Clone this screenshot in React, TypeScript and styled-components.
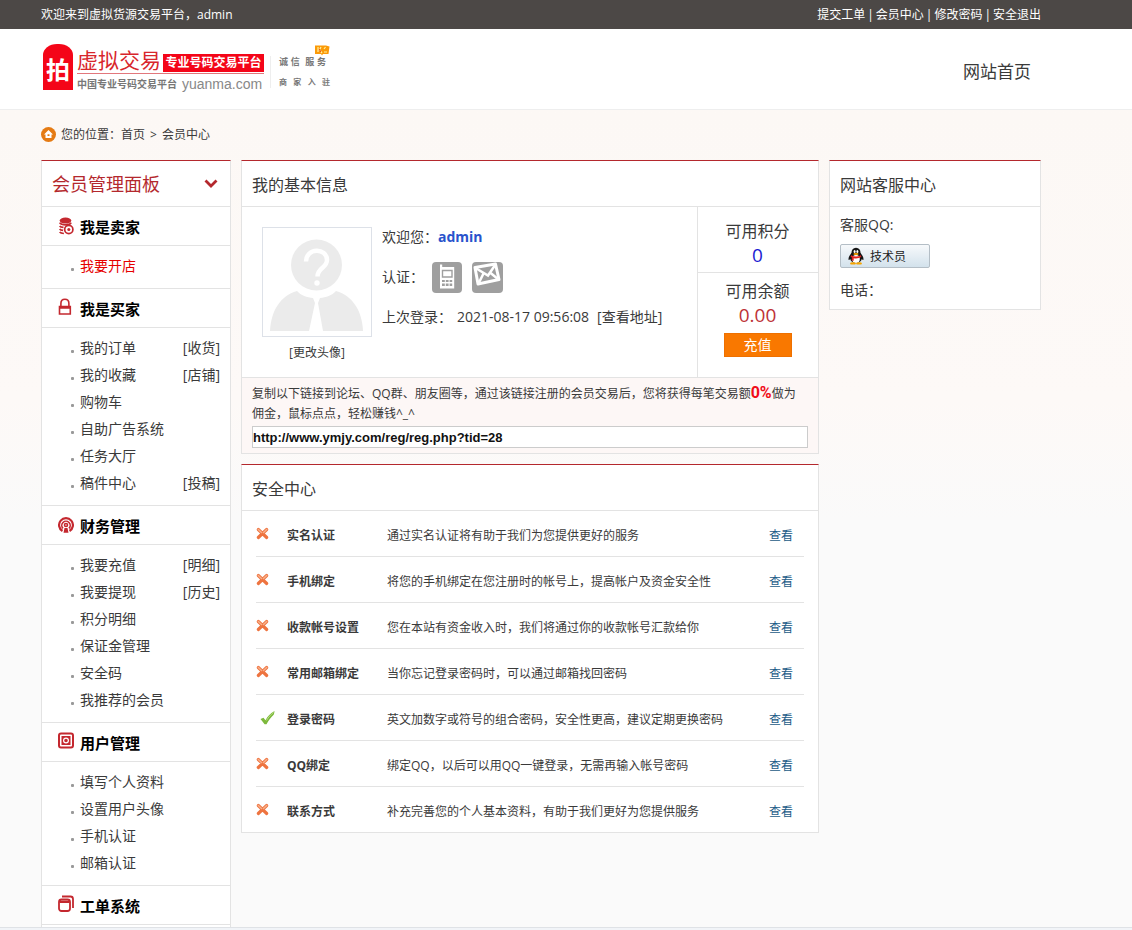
import React from 'react';
import styled, { createGlobalStyle } from 'styled-components';

const line = '#e3e3e3';
const red = '#b4282d';

const GlobalStyle = createGlobalStyle`
  *, *::before, *::after { box-sizing: border-box; }
  body {
    margin: 0;
    background: linear-gradient(to bottom, #fcf8f5 110px, #fdf9f7 400px, #fafafa 520px) no-repeat #fafafa;
    color: #3a3a3a;
    font: 12px/20px "Open Sans", "Noto Sans CJK SC", sans-serif;
  }
  a { color: inherit; text-decoration: none; }
  a:hover { text-decoration: underline; }
  ul, h1, h2, h3, p, dl, dd { margin: 0; padding: 0; list-style: none; }
`;

const Gutter = styled.div`
  padding: 0 91px 0 41px;
`;

const TopBar = styled(Gutter)`
  display: flex;
  justify-content: space-between;
  height: 29px;
  line-height: 29px;
  background: #4c4846;
  color: #fff;
`;

const TopLinks = styled.nav`
  display: flex;
  gap: 2px;
`;

const Header = styled(Gutter)`
  display: flex;
  justify-content: space-between;
  align-items: center;
  height: 81px;
  padding-right: 101px;
  background: #fff;
  border-bottom: 1px solid #eee;
`;

const HomeLink = styled.a`
  font-size: 17px;
  line-height: 24px;
  padding-top: 6px;
`;

const Logo = styled.a`
  display: flex;
  align-items: flex-start;
  padding: 0 0 2px 2px;
  &:hover { text-decoration: none; }
`;

const Seal = styled.span`
  display: flex;
  align-items: flex-end;
  justify-content: center;
  width: 30px;
  height: 46px;
  padding-bottom: 4px;
  border-radius: 14px 14px 0 0 / 11px 11px 0 0;
  background: #f40518;
  color: #fff;
  font-size: 24px;
  line-height: 32px;
  font-weight: 700;
`;

const Brand = styled.span`
  display: flex;
  flex-direction: column;
  margin-left: 4px;
  padding-top: 5px;
`;

const BrandTop = styled.span`
  display: flex;
  align-items: flex-end;
  gap: 2px;
  padding-bottom: 1px;
  border-bottom: 1px solid #e2777c;
`;

const BrandName = styled.span`
  color: #d8262c;
  font-size: 21px;
  line-height: 23px;
`;

const BrandTag = styled.span`
  display: flex;
  justify-content: center;
  width: 101px;
  background: #f40518;
  color: #fff;
  font-size: 12px;
  line-height: 18px;
  font-weight: 700;
  white-space: nowrap;
`;

const BrandBottom = styled.span`
  display: flex;
  align-items: center;
  gap: 5px;
  padding-top: 3px;
  color: #777;
  font-size: 10px;
  line-height: 15px;
  font-weight: 700;
`;

const Domain = styled.span`
  font: 14px/15px "Liberation Sans", sans-serif;
  color: #888;
`;

const Slogan = styled.span`
  display: flex;
  flex-direction: column;
  gap: 8px;
  margin: 12px 0 0 6px;
  padding-left: 8px;
  border-left: 1px solid #eee;
  color: #777;
  font-weight: 700;
`;

const SloganLine = styled.span<{ $small?: boolean }>`
  position: relative;
  display: flex;
  justify-content: space-between;
  width: ${p => (p.$small ? 51 : 47)}px;
  font-size: ${p => (p.$small ? 8 : 9)}px;
  line-height: 12px;
`;

const Flame = styled.svg`
  position: absolute;
  right: -4px;
  top: -12px;
`;

const Crumbs = styled(Gutter)`
  display: flex;
  align-items: center;
  gap: 4px;
  height: 50px;
`;

const Trail = styled.span`
  display: flex;
  gap: 5px;
`;

const Columns = styled(Gutter)`
  display: flex;
  align-items: flex-start;
  gap: 10px;
`;

const Panel = styled.section`
  background: #fff;
  border: 1px solid ${line};
  border-top-color: ${red};
`;

const PanelTitle = styled.h2`
  height: 46px;
  padding: 4px 10px 0;
  border-bottom: 1px solid ${line};
  font-size: 16px;
  line-height: 41px;
  font-weight: 400;
`;

const Sidebar = styled(Panel)`
  flex: 0 0 190px;
  padding-bottom: 2px;
  border-bottom: 0;
`;

const SidebarTitle = styled.h2`
  display: flex;
  align-items: center;
  justify-content: space-between;
  height: 46px;
  padding: 0 12px 0 10px;
  border-bottom: 1px solid ${line};
  color: ${red};
  font-size: 18px;
  line-height: 44px;
  font-weight: 400;
`;

const GroupTitle = styled.h3`
  display: flex;
  align-items: center;
  gap: 6px;
  height: 39px;
  padding-left: 16px;
  border-bottom: 1px solid ${line};
  color: #000;
  font-size: 15px;
  font-weight: 700;
  span { padding-top: 2px; }
`;

const GroupList = styled.ul`
  padding: 6px 10px 9px 28px;
  border-bottom: 1px solid ${line};
`;

const Item = styled.li<{ $hot?: boolean }>`
  display: flex;
  align-items: center;
  font-size: 14px;
  line-height: 27px;
  color: ${p => (p.$hot ? '#e60000' : 'inherit')};
  &::before {
    content: "";
    width: 3px;
    height: 3px;
    margin: 8px 6px 0 1px;
    border-radius: 1px;
    background: #999;
  }
`;

const ItemExtra = styled.a`
  margin-left: auto;
`;

const Center = styled.main`
  flex: 1;
  min-width: 0;
  display: flex;
  flex-direction: column;
  gap: 10px;
`;

const Profile = styled.div`
  display: flex;
  height: 171px;
  border-bottom: 1px solid ${line};
`;

const AvatarBox = styled.div`
  display: flex;
  flex-direction: column;
  align-items: center;
  gap: 6px;
  width: 110px;
  margin: 20px 10px 0 20px;
`;

const AvatarFrame = styled.div`
  width: 110px;
  height: 110px;
  border: 1px solid #dde1e8;
`;

const Facts = styled.dl`
  flex: 1;
  padding-top: 10px;
  font-size: 14px;
`;

const Fact = styled.div`
  display: flex;
  align-items: center;
  height: 40px;
`;

const UserName = styled.a`
  color: #2953cc;
  font-weight: 700;
`;

const BadgeList = styled.dd`
  display: flex;
  gap: 10px;
  && { padding-left: 8px; }
`;

const LoginInfo = styled.dd`
  display: flex;
  gap: 8px;
  && { padding-left: 5px; }
`;

const Funds = styled.div`
  width: 121px;
  border-left: 1px solid ${line};
  text-align: center;
`;

const Fund = styled.div<{ $first?: boolean }>`
  padding: ${p => (p.$first ? 13 : 7)}px 1px 0 0;
  height: ${p => (p.$first ? '66px' : 'auto')};
  border-bottom: ${p => (p.$first ? `1px solid ${line}` : '0')};
`;

const FundLabel = styled.div`
  font-size: 16px;
  line-height: 23px;
`;

const FundValue = styled.div<{ $color: string }>`
  font-size: 19px;
  line-height: 24px;
  color: ${p => p.$color};
`;

const Recharge = styled.button`
  width: 68px;
  height: 24px;
  margin-top: 6px;
  padding: 0;
  border: 1px solid #ee7000;
  background: #f97800;
  color: #fff;
  font: inherit;
  font-size: 14px;
  cursor: pointer;
`;

const Promo = styled.div`
  padding: 6px 10px 5px;
  background: #fdf7f6;
`;

const Rate = styled.b`
  color: #f00c18;
  font: 700 16px/16px Roboto, sans-serif;
`;

const PromoText = styled.label`
  display: block;
  padding-right: 8px;
  line-height: 20px;
`;

const PromoInput = styled.input`
  display: block;
  width: 100%;
  height: 22px;
  margin-top: 2px;
  padding: 0;
  border: 1px solid #ccc;
  background: #fff;
  color: #111;
  font: 700 13px "Liberation Sans", sans-serif;
`;

const TableWrap = styled.div`
  padding: 0 14px;
`;

const SafeTable = styled.table`
  width: 100%;
  border-collapse: separate;
  border-spacing: 0;
  table-layout: fixed;
  tr:not(:last-child) > * { border-bottom: 1px solid ${line}; }
`;

const IconCell = styled.td`
  width: 31px;
  height: 45px;
  padding: 0;
  svg { display: block; }
  tr:not(:last-child) > & { height: 46px; }
`;

const NameCell = styled.th`
  width: 100px;
  padding: 4px 0 0;
  text-align: left;
  font-weight: 700;
  white-space: nowrap;
`;

const DescCell = styled.td`
  padding: 4px 0 0;
`;

const LinkCell = styled.td`
  width: 35px;
  padding: 4px 0 0;
  a { color: #1c5b87; }
`;

const Aside = styled(Panel)`
  flex: 0 0 212px;
`;

const AsideBody = styled.div`
  padding: 8px 10px 9px;
  font-size: 14px;
`;

const QQButton = styled.button`
  display: flex;
  align-items: center;
  gap: 5px;
  width: 90px;
  height: 24px;
  margin: 9px 0 12px;
  padding: 0 0 0 6px;
  border: 1px solid #b4bec6;
  border-radius: 2px;
  background: linear-gradient(#f7f9fb, #d3e2ec);
  color: #222;
  font: inherit;
  font-size: 12px;
  cursor: pointer;
  span { padding-top: 2px; }
`;

const Bottom = styled.footer`
  height: 3px;
  border-top: 1px solid #dfe2e6;
  background: #f1f4f8;
`;

const CoinsIcon = () => (
  <svg width="16" height="18" viewBox="0 0 16 18" fill="none" stroke="#c4282f" strokeWidth="1.7">
    <ellipse cx="7.5" cy="3.6" rx="5.8" ry="3" fill="#c4282f" stroke="none" />
    <path d="M1.700 5.600c1 1.800 4 2.200 6 2.200s4.600-.4 5.400-2.200" />
    <path d="M1.700 9c.6 1 2 1.300 3.800 1.400M1.700 12c.6 1 1.800 1.300 3.400 1.400M1.700 15c.8 1.200 2.200 1.400 4.200 1.500" />
    <circle cx="10.800" cy="12.500" r="4.100" /><circle cx="10.800" cy="12.500" r="1.500" fill="#c4282f" stroke="none" />
  </svg>
);
const LockIcon = () => (
  <svg width="16" height="20" viewBox="0 0 16 20" fill="none" stroke="#c4282f" strokeWidth="1.6">
    <path d="M1.500 8.500h10.800v7.500H1.500zM2.900 8.500V5.500c0-5.600 8-5.600 8 0v3M2 10h10" />
  </svg>
);
const BroadcastIcon = () => (
  <svg width="16" height="16" viewBox="0 0 16 16" fill="none" stroke="#c4282f" strokeWidth="1.600">
    <path d="M4.500 14a6.900 6.900 0 1 1 7 0" strokeWidth="2.200" />
    <path d="M5 11.400a4.200 4.200 0 1 1 6 0" />
    <circle cx="8" cy="8" r="1.500" />
    <path d="M6.500 11h3l1 4.700h-5z" fill="#c4282f" stroke="none" />
  </svg>
);
const SafeIcon = () => (
  <svg width="16" height="20" viewBox="0 0 16 20" fill="none" stroke="#c4282f">
    <rect x="1" y="1.500" width="14" height="14" rx="2" strokeWidth="2" />
    <rect x="3.500" y="4" width="9" height="9" fill="#c4282f" stroke="none" />
    <circle cx="8" cy="8.500" r="2.400" stroke="#fff" strokeWidth="1.200" />
  </svg>
);
const StackIcon = () => (
  <svg width="16" height="20" viewBox="0 0 16 20" fill="none" stroke="#c4282f" strokeWidth="1.800">
    <rect x="1" y="4.500" width="11" height="11.500" rx="2.500" />
    <path d="M1.500 6.800h10" strokeWidth="2.400" />
    <path d="M4 1.500h8.500c1.600 0 2.500.9 2.500 2.500v9" />
  </svg>
);

const CrossMark = () => (
  <svg width="14" height="20" viewBox="0 0 14 20">
    <path d="M2.300 5.500l8.400 8M10.700 5.500l-8.400 8" stroke="#ee7440" strokeWidth="3.200" strokeLinecap="round" />
    <path d="M2.300 5.500l3.200 3M10.700 5.500l-3.200 3" stroke="#f8b08a" strokeWidth="1.500" strokeLinecap="round" />
  </svg>
);
const CheckMark = () => (
  <svg width="20" height="20" viewBox="0 0 20 20">
    <path d="M4.500 11l3-1.300 2 2.600C11.500 8.500 14 5.500 18.500 3c-.2 1.700-.4 3-.8 3.800C15 9.500 12.500 12.500 10.500 16.300H8.600z" fill="#7db93c" />
    <path d="M10.500 12.500C12.500 9 15 6.500 17.500 4.500" stroke="#b5dc7f" fill="none" />
  </svg>
);

const Avatar = () => (
  <svg width="108" height="108" viewBox="0 0 108 108">
    <circle cx="53.500" cy="37" r="25.500" fill="#ebebeb" />
    <path d="M43 33.500c0-14 21-14 21-1.500 0 8-9.500 7.500-9.500 16.500" fill="none" stroke="#fff" strokeWidth="4.500" />
    <circle cx="54" cy="55" r="2.700" fill="#fff" />
    <path d="M7 103c1-20 10-35 27-40 4 4.500 10 6.500 16 7l2 5-6 28zM100 103c-1-20-10-35-27-40-4 4.500-10 6.500-16 7l-2 5 5 28z" fill="#ebebeb" />
  </svg>
);

const PhoneBadge = () => (
  <svg width="30" height="31" viewBox="0 0 30 31">
    <rect width="30" height="31" rx="4" fill="#9f9f9f" />
    <path d="M8 2.500h2.200V5h12v21.500H8z" fill="#fff" />
    <path d="M10.500 8.500h9.500V15h-9.500z" fill="#fff" stroke="#9f9f9f" strokeWidth="1.400" />
    <path d="M10 18h2.800v2H10zM13.800 18h2.800v2h-2.800zM17.600 18h2.600v2h-2.600zM10 21.500h2.800v2.500H10zM13.800 21.500h2.800v2.500h-2.800zM17.600 21.500h2.600v2.500h-2.600z" fill="#9f9f9f" />
  </svg>
);
const MailBadge = () => (
  <svg width="31" height="31" viewBox="0 0 31 31">
    <rect width="31" height="31" rx="4" fill="#9f9f9f" />
    <path d="M3 5.500L23.500 2l3.500 15.500-21 4.500z" fill="#9f9f9f" stroke="#fff" strokeWidth="3" strokeLinejoin="round" />
    <path d="M3.500 6l12.500 7.500L23.500 2.500M6.500 21.500l5-10M26.500 17.500l-8.500-7" fill="none" stroke="#fff" strokeWidth="2.500" />
  </svg>
);

const Penguin = () => (
  <svg width="18" height="18" viewBox="0 0 17 18">
    <path d="M8.500.8c-3 0-4.500 2.200-4.500 5C2.500 8 1 9.800 1 12.200c0 1.200.8.9 1.700-.3.4 2 2.500 4.100 5.800 4.100s5.400-2.100 5.800-4.100c.9 1.200 1.700 1.500 1.700.3 0-2.400-1.500-4.200-3-6.400 0-2.800-1.500-5-4.500-5z" fill="#151515" />
    <ellipse cx="8.500" cy="12" rx="3.800" ry="4" fill="#fff" />
    <ellipse cx="7.100" cy="4.500" rx="1" ry="1.500" fill="#fff" /><ellipse cx="9.900" cy="4.500" rx="1" ry="1.500" fill="#fff" />
    <ellipse cx="8.500" cy="7" rx="2.600" ry=".9" fill="#f5a400" />
    <path d="M3.600 8.300c3 1.700 6.800 1.700 9.800 0l.4 1.800c-2.500 1.300-5 1.500-7.600 1.100v2.600l-2-.3.200-3.100-1.300-.6z" fill="#e02020" />
    <ellipse cx="5.500" cy="16.400" rx="3" ry="1.200" fill="#f5a400" /><ellipse cx="11.500" cy="16.400" rx="3" ry="1.200" fill="#f5a400" />
  </svg>
);

const HomeMark = () => (
  <svg width="16" height="16" viewBox="0 0 16 16">
    <circle cx="7.500" cy="7.500" r="7.500" fill="#e57b14" />
    <path d="M7.500 3L3 7.500h1.500v3.600h6V7.500H12z" fill="#fff" />
    <path d="M6.500 7.300h2v1.700h-2z" fill="#e57b14" />
  </svg>
);

type Entry = { name: string; extra?: string; hot?: boolean };
const groups: { title: string; icon: React.ReactNode; items: Entry[] }[] = [
  { title: '我是卖家', icon: <CoinsIcon />, items: [{ name: '我要开店', hot: true }] },
  {
    title: '我是买家', icon: <LockIcon />, items: [
      { name: '我的订单', extra: '[收货]' }, { name: '我的收藏', extra: '[店铺]' }, { name: '购物车' },
      { name: '自助广告系统' }, { name: '任务大厅' }, { name: '稿件中心', extra: '[投稿]' },
    ],
  },
  {
    title: '财务管理', icon: <BroadcastIcon />, items: [
      { name: '我要充值', extra: '[明细]' }, { name: '我要提现', extra: '[历史]' }, { name: '积分明细' },
      { name: '保证金管理' }, { name: '安全码' }, { name: '我推荐的会员' },
    ],
  },
  {
    title: '用户管理', icon: <SafeIcon />, items: [
      { name: '填写个人资料' }, { name: '设置用户头像' }, { name: '手机认证' }, { name: '邮箱认证' },
    ],
  },
  { title: '工单系统', icon: <StackIcon />, items: [] },
];

const safety: [string, string, boolean][] = [
  ['实名认证', '通过实名认证将有助于我们为您提供更好的服务', false],
  ['手机绑定', '将您的手机绑定在您注册时的帐号上，提高帐户及资金安全性', false],
  ['收款帐号设置', '您在本站有资金收入时，我们将通过你的收款帐号汇款给你', false],
  ['常用邮箱绑定', '当你忘记登录密码时，可以通过邮箱找回密码', false],
  ['登录密码', '英文加数字或符号的组合密码，安全性更高，建议定期更换密码', true],
  ['QQ绑定', '绑定QQ，以后可以用QQ一键登录，无需再输入帐号密码', false],
  ['联系方式', '补充完善您的个人基本资料，有助于我们更好为您提供服务', false],
];

const topLinks = ['提交工单', '会员中心', '修改密码', '安全退出'];

export default function App() {
  return (
    <>
      <GlobalStyle />
      <TopBar>
        <span>欢迎来到虚拟货源交易平台，admin</span>
        <TopLinks>
          {topLinks.map((t, i) => (
            <React.Fragment key={t}>
              {i > 0 && <span>|</span>}
              <a href="#">{t}</a>
            </React.Fragment>
          ))}
        </TopLinks>
      </TopBar>
      <Header as="header">
        <Logo href="#">
          <Seal>拍</Seal>
          <Brand>
            <BrandTop>
              <BrandName>虚拟交易</BrandName>
              <BrandTag>专业号码交易平台</BrandTag>
            </BrandTop>
            <BrandBottom>
              中国专业号码交易平台
              <Domain>yuanma.com</Domain>
            </BrandBottom>
          </Brand>
          <Slogan>
            <SloganLine>
              <span>诚</span><span>信</span><span /><span>服</span><span>务</span>
              <Flame width="16" height="12" viewBox="0 0 16 12">
                <path d="M1 1.500h11l3.500 1-1 7.500H9l-1 1.500-1-1.500H1z" fill="#fb9a08" />
                <path d="M4 3v5M7 3l-1.500 3L8 9M10 5l1.500-2M10 8h3" stroke="#fff3a0" strokeWidth="1.200" fill="none" />
                <path d="M5.500 5l1 3" stroke="#e23a10" />
              </Flame>
            </SloganLine>
            <SloganLine $small>
              <span>商</span><span>家</span><span>入</span><span>驻</span>
            </SloganLine>
          </Slogan>
        </Logo>
        <HomeLink href="#">网站首页</HomeLink>
      </Header>

      <Crumbs as="nav">
        <HomeMark />
        <Trail>
          <span>您的位置：<a href="#">首页</a></span>
          <span>&gt;</span>
          <a href="#">会员中心</a>
        </Trail>
      </Crumbs>

      <Columns>
        <Sidebar>
          <SidebarTitle>
            会员管理面板
            <svg width="14" height="10" viewBox="0 0 14 10">
              <path d="M1.500 1.500L7 7l5.500-5.500" fill="none" stroke={red} strokeWidth="2.800" />
            </svg>
          </SidebarTitle>
          {groups.map(g => (
            <React.Fragment key={g.title}>
              <GroupTitle>{g.icon}<span>{g.title}</span></GroupTitle>
              {g.items.length > 0 && (
                <GroupList>
                  {g.items.map(it => (
                    <Item key={it.name} $hot={it.hot}>
                      <a href="#">{it.name}</a>
                      {it.extra && <ItemExtra href="#">{it.extra}</ItemExtra>}
                    </Item>
                  ))}
                </GroupList>
              )}
            </React.Fragment>
          ))}
        </Sidebar>

        <Center>
          <Panel>
            <PanelTitle>我的基本信息</PanelTitle>
            <Profile>
              <AvatarBox>
                <AvatarFrame><Avatar /></AvatarFrame>
                <a href="#">[更改头像]</a>
              </AvatarBox>
              <Facts>
                <Fact><dt>欢迎您：</dt><dd><UserName href="#">admin</UserName></dd></Fact>
                <Fact><dt>认证：</dt><BadgeList><PhoneBadge /><MailBadge /></BadgeList></Fact>
                <Fact>
                  <dt>上次登录：</dt>
                  <LoginInfo><span>2021-08-17 09:56:08</span><a href="#">[查看地址]</a></LoginInfo>
                </Fact>
              </Facts>
              <Funds>
                <Fund $first>
                  <FundLabel>可用积分</FundLabel>
                  <FundValue $color="#1c1cd2">0</FundValue>
                </Fund>
                <Fund>
                  <FundLabel>可用余额</FundLabel>
                  <FundValue $color="#bd3237">0.00</FundValue>
                  <Recharge type="button">充值</Recharge>
                </Fund>
              </Funds>
            </Profile>
            <Promo>
              <PromoText htmlFor="invite">
                复制以下链接到论坛、QQ群、朋友圈等，通过该链接注册的会员交易后，您将获得每笔交易额<Rate>0%</Rate>做为佣金，鼠标点点，轻松赚钱^_^
              </PromoText>
              <PromoInput id="invite" readOnly value="http://www.ymjy.com/reg/reg.php?tid=28" />
            </Promo>
          </Panel>

          <Panel>
            <PanelTitle>安全中心</PanelTitle>
            <TableWrap>
              <SafeTable>
                <tbody>
                  {safety.map(([name, desc, ok]) => (
                    <tr key={name}>
                      <IconCell>{ok ? <CheckMark /> : <CrossMark />}</IconCell>
                      <NameCell scope="row">{name}</NameCell>
                      <DescCell>{desc}</DescCell>
                      <LinkCell><a href="#">查看</a></LinkCell>
                    </tr>
                  ))}
                </tbody>
              </SafeTable>
            </TableWrap>
          </Panel>
        </Center>

        <Aside>
          <PanelTitle>网站客服中心</PanelTitle>
          <AsideBody>
            <p>客服QQ:</p>
            <QQButton type="button"><Penguin /><span>技术员</span></QQButton>
            <p>电话：</p>
          </AsideBody>
        </Aside>
      </Columns>
      <Bottom />
    </>
  );
}
